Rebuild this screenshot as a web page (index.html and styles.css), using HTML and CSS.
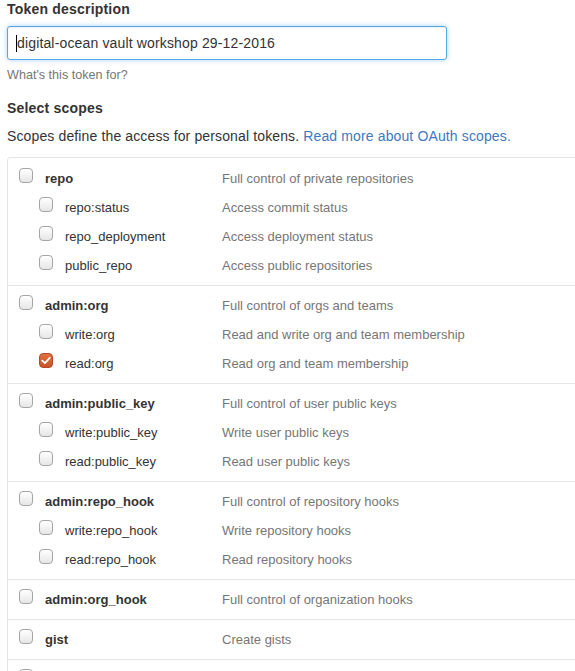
FILE: index.html
```html
<!DOCTYPE html>
<html>
<head>
<meta charset="utf-8">
<link rel="stylesheet" href="styles.css">
</head>
<body>
<div class="page">
  <div class="label">Token description</div>
  <div class="input"><span class="caret"></span>digital-ocean vault workshop 29-12-2016</div>
  <div class="note">What's this token for?</div>
  <div class="label scopes-title">Select scopes</div>
  <p class="lead">Scopes define the access for personal tokens. <a href="#">Read more about OAuth scopes.</a></p>
  <div class="box">
    <div class="group">
      <div class="row"><span class="cb"></span><span class="name">repo</span><span class="desc">Full control of private repositories</span></div>
      <div class="row sub"><span class="cb"></span><span class="name">repo:status</span><span class="desc">Access commit status</span></div>
      <div class="row sub"><span class="cb"></span><span class="name">repo_deployment</span><span class="desc">Access deployment status</span></div>
      <div class="row sub"><span class="cb"></span><span class="name">public_repo</span><span class="desc">Access public repositories</span></div>
    </div>
    <div class="group">
      <div class="row"><span class="cb"></span><span class="name">admin:org</span><span class="desc">Full control of orgs and teams</span></div>
      <div class="row sub"><span class="cb"></span><span class="name">write:org</span><span class="desc">Read and write org and team membership</span></div>
      <div class="row sub"><span class="cb checked"><svg viewBox="0 0 16 16" width="13" height="13"><path d="M3 8.2 L6.6 11.6 L13 4.4" fill="none" stroke="#fff" stroke-width="2.4" stroke-linecap="round" stroke-linejoin="round"/></svg></span><span class="name">read:org</span><span class="desc">Read org and team membership</span></div>
    </div>
    <div class="group">
      <div class="row"><span class="cb"></span><span class="name">admin:public_key</span><span class="desc">Full control of user public keys</span></div>
      <div class="row sub"><span class="cb"></span><span class="name">write:public_key</span><span class="desc">Write user public keys</span></div>
      <div class="row sub"><span class="cb"></span><span class="name">read:public_key</span><span class="desc">Read user public keys</span></div>
    </div>
    <div class="group">
      <div class="row"><span class="cb"></span><span class="name">admin:repo_hook</span><span class="desc">Full control of repository hooks</span></div>
      <div class="row sub"><span class="cb"></span><span class="name">write:repo_hook</span><span class="desc">Write repository hooks</span></div>
      <div class="row sub"><span class="cb"></span><span class="name">read:repo_hook</span><span class="desc">Read repository hooks</span></div>
    </div>
    <div class="group">
      <div class="row"><span class="cb"></span><span class="name">admin:org_hook</span><span class="desc">Full control of organization hooks</span></div>
    </div>
    <div class="group">
      <div class="row"><span class="cb"></span><span class="name">gist</span><span class="desc">Create gists</span></div>
    </div>
    <div class="group">
      <div class="row"><span class="cb"></span></div>
    </div>
  </div>
</div>
</body>
</html>
```

FILE: styles.css
```css
html, body {
  margin: 0;
  padding: 0;
  background: #fff;
}
body {
  font-family: "Liberation Sans", Arial, sans-serif;
  color: #333;
  font-size: 13px;
}
.page {
  height: 671px;
  overflow: hidden;
  padding: 0 0 0 7px;
}
.label {
  font-weight: bold;
  font-size: 14px;
  line-height: 18px;
  letter-spacing: 0.2px;
}
.input {
  box-sizing: border-box;
  margin-top: 8px;
  width: 440px;
  height: 34px;
  border: 1px solid #51a7e8;
  border-radius: 3px;
  box-shadow: inset 0 1px 2px rgba(0,0,0,0.075), 0 0 5px rgba(81,167,232,0.5);
  padding: 0 8px;
  font-size: 14px;
  letter-spacing: 0.15px;
  line-height: 32px;
  color: #333;
  display: flex;
  align-items: center;
}
.caret {
  display: inline-block;
  width: 1px;
  height: 17px;
  background: #000;
}
.note {
  margin-top: 7px;
  font-size: 12.6px;
  color: #767676;
  line-height: 16px;
}
.scopes-title {
  margin-top: 16px;
}
.lead {
  margin: 9px 0 0;
  font-size: 14px;
  letter-spacing: 0.13px;
  line-height: 20px;
}
.lead a {
  color: #4078c0;
  text-decoration: none;
}
.box {
  margin-top: 11px;
  width: 640px;
  border: 1px solid #e5e5e5;
  border-radius: 3px;
}
.group {
  padding: 5px 0;
  border-top: 1px solid #e5e5e5;
}
.group:first-child {
  border-top: 0;
  padding-top: 6px;
}
.row {
  height: 29px;
  display: flex;
  align-items: center;
  padding-left: 11px;
}
.row.sub {
  padding-left: 31px;
}
.cb {
  box-sizing: border-box;
  width: 14px;
  height: 15px;
  border: 1px solid #a5a5a5;
  border-radius: 4px;
  background: linear-gradient(#ffffff, #e6e6e6);
  margin-top: -6px;
  flex: none;
  display: flex;
  align-items: center;
  justify-content: center;
}
.cb.checked {
  background: linear-gradient(#e2703f, #c9532a);
  border-color: #b24a25;
}
.name {
  margin-left: 12px;
  flex: none;
}
.row:not(.sub) .name {
  font-weight: bold;
  width: 177px;
}
.row.sub .name {
  width: 157px;
}
.desc {
  color: #767676;
}
```
